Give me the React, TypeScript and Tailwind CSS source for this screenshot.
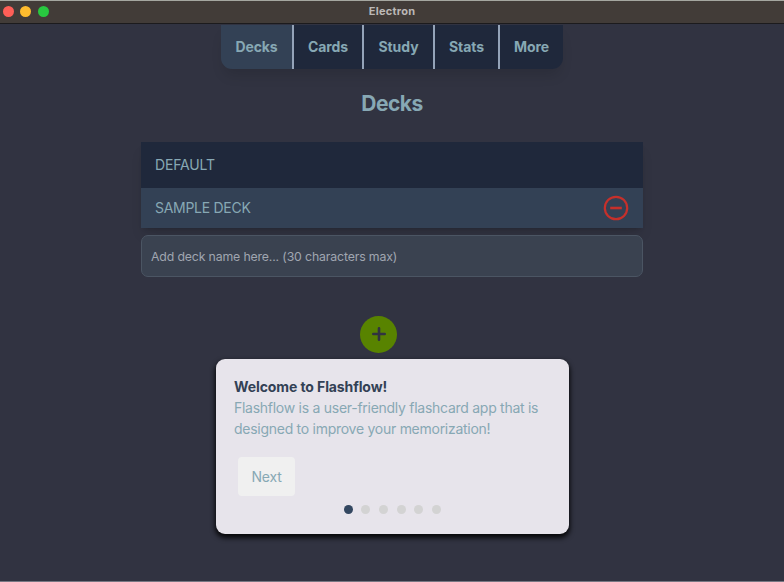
const tabs = [
  { name: "Decks", box: "w-[73px] border-r-2 rounded-bl-[11px] bg-[#334155]" },
  { name: "Cards", box: "w-[70px] border-r-2 bg-[#1f283b]" },
  { name: "Study", box: "w-[71px] border-r-2 bg-[#1f283b]" },
  { name: "Stats", box: "w-[65px] border-r-2 bg-[#1f283b]" },
  { name: "More", box: "w-[63px] rounded-br-[11px] bg-[#1f283b]" },
];

function TitleBar() {
  return (
    <header className="grid h-6 grid-cols-3 items-center border-t border-b border-t-[#a5a7a0] border-b-[#1c1b1d] bg-[#423c38]">
      <div className="flex gap-[6.6px] pb-px pl-[2.8px]">
        <span className="size-[11px] rounded-full bg-[#ff5f57]" />
        <span className="size-[11px] rounded-full bg-[#febc2e]" />
        <span className="size-[11px] rounded-full bg-[#28c840]" />
      </div>
      <span className="pb-px text-center text-[11px] leading-none font-bold tracking-[0.25px] text-[#bbb8b6]">Electron</span>
    </header>
  );
}

function Nav() {
  return (
    <nav className="mx-auto mt-px flex h-11 w-[342px] rounded-b-[11px] shadow-[0_9px_13px_-3px_rgba(0,0,0,0.12)]">
      {tabs.map((t) => (
        <button key={t.name} className={`flex items-center justify-center border-[#94a3b8] pb-px text-[14px] font-bold tracking-[-0.08px] text-[#87a8b4] ${t.box}`}>
          {t.name}
        </button>
      ))}
    </nav>
  );
}

function Tour() {
  return (
    <section className="ml-[216px] mt-[6px] h-[175px] w-[352.5px] rounded-[9px] bg-[#e7e4eb] px-[18px] pt-[17px] text-[14px] leading-[21px] text-[#87a8b4] shadow-[0_3px_5px_1px_rgba(0,0,0,0.85)]">
      <h2 className="font-bold tracking-[-0.1px] text-[#334155]">Welcome to Flashflow!</h2>
      <p className="whitespace-nowrap tracking-[-0.27px]">
        Flashflow is a user-friendly flashcard app that is
        <br />
        designed to improve your memorization!
      </p>
      <button className="mt-[18px] ml-1 flex h-[39px] w-[57px] items-center justify-center rounded-[4px] bg-[#f0f0f0] tracking-[-0.2px]">Next</button>
      <div className="mt-[9px] flex justify-center gap-[8.6px]">
        <span className="size-[9px] rounded-full bg-[#334760]" />
        {[1, 2, 3, 4, 5].map((n) => (
          <span key={n} className="size-[9px] rounded-full bg-[#d3d3d3]" />
        ))}
      </div>
    </section>
  );
}

export default function App() {
  return (
    <div className="h-[582px] overflow-hidden border-b border-[#777783] bg-[#313341] font-['Inter','Liberation_Sans',sans-serif]">
      <TitleBar />
      <Nav />
      <h1 className="mt-5 text-center text-[21px] leading-[30px] font-bold tracking-[-0.5px] text-[#87a8b4]">Decks</h1>
      <main className="mx-auto mt-[23px] w-[502px]">
        <ul className="text-[14px] text-[#87a8b4] shadow-[0_9px_13px_-3px_rgba(0,0,0,0.12),0_3px_5px_-3px_rgba(0,0,0,0.2)]">
          <li className="flex h-[45.5px] items-center bg-[#1f283b] px-[14px] tracking-[-0.15px]">DEFAULT</li>
          <li className="flex h-[40.5px] items-center justify-between bg-[#334155] px-[14px] tracking-[-0.28px]">
            SAMPLE DECK
            <svg width="26" height="26" viewBox="0 0 26 26" fill="none" stroke="#c6302b" strokeWidth="2.2">
              <circle cx="13" cy="13" r="11.2" />
              <path d="M7.2 13h11.6" strokeWidth="2.6" />
            </svg>
          </li>
        </ul>
        <input
          className="mt-[7px] block h-[42px] w-full rounded-[7px] border border-[#4b5563] bg-[#3a4250] px-[9px] text-[12.3px] tracking-[-0.15px] text-[#a7adb7] outline-none placeholder:text-[#a0a6b0]"
          placeholder="Add deck name here... (30 characters max)"
        />
      </main>
      <button className="mt-[39px] ml-[360px] flex size-[37px] items-center justify-center rounded-full bg-[#588300] pb-px">
        <svg width="14" height="14" viewBox="0 0 14 14" stroke="#313341" strokeWidth="2.6" strokeLinecap="round">
          <path d="M7 1.3v11.4M1.3 7h11.4" />
        </svg>
      </button>
      <Tour />
    </div>
  );
}
